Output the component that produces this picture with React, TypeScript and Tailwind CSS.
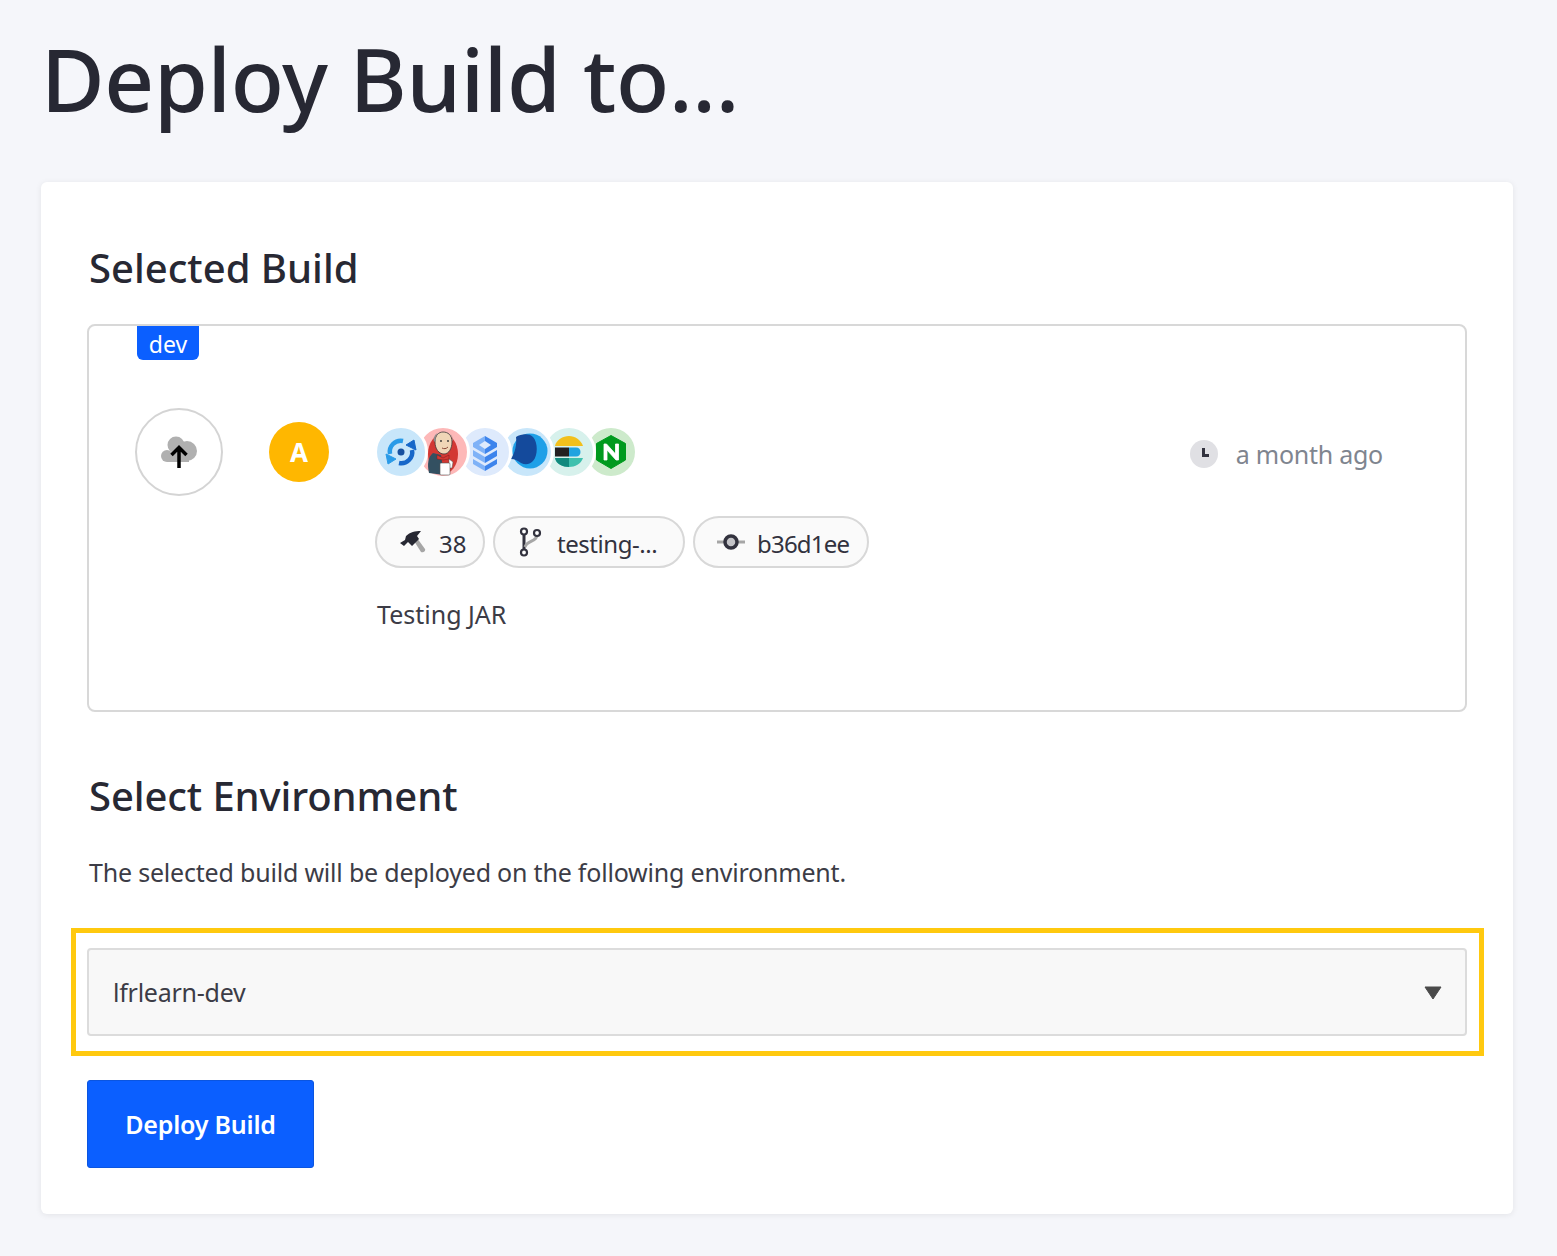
const font = { fontFamily: '"Noto Sans", "Open Sans", sans-serif' };

function StackIcons() {
  return (
    <svg width="258" height="48" viewBox="0 0 258 48" className="block">
      {/* drawn right to left: each circle sits on the next one, white ring makes the bite */}
      <circle cx="234" cy="24" r="24" fill="#cdeacb" />
      <path d="M234 7.500l14.500 8v16.500l-14.500 8.500-14.500-8.500v-16.500z" fill="#009a1e" stroke="#009a1e" strokeLinejoin="round" />
      <path d="M227 32V16h2.500l9 10V16h3v16h-2.500l-9-10v10z" fill="#fff" stroke="#fff" strokeWidth="0.8" />

      <circle cx="192" cy="24" r="25.500" fill="#d7f1ec" stroke="#fff" strokeWidth="3" />
      <path d="M178 18c1-6 8-10 14-10 6 0 12 4 14 10z" fill="#f2c01b" />
      <rect x="178" y="19.500" width="14" height="9" fill="#231f20" />
      <path d="M192 19.500h7c3 0 4.500 2 4.500 4.500s-1.500 4.500-4.500 4.500h-7z" fill="#21a3e0" />
      <path d="M178 30h28c-2 6-8 9-14 9-6 0-13-3-14-9z" fill="#3ec1ae" />
      <path d="M178 30h14v9c-6 0-13-3-14-9z" fill="#118a7e" />

      <circle cx="150" cy="24" r="25.500" fill="#c8e6fa" stroke="#fff" strokeWidth="3" />
      <circle cx="153" cy="23" r="17.500" fill="#1ea0e8" />
      <path d="M139 9c5-3 13-4 17 0 5 5 5 19 0 24-4 4-8 4-12 2-3-2-6-4-10-4 4-6 6-15 5-22z" fill="#144a9c" />

      <circle cx="108" cy="24" r="25.500" fill="#deeafc" stroke="#fff" strokeWidth="3" />
      <path d="M108 8l12 7v4l-12 7z" fill="#3d84ec" />
      <path d="M108 8l-12 7v4l12 7z" fill="#7fb2f7" />
      <path d="M108 13l6 4-6 4-6-4z" fill="#deeafc" />
      <path d="M96 22l12 7v6l-12-7z" fill="#7fb2f7" />
      <path d="M120 22l-12 7v6l12-7z" fill="#3d84ec" />
      <path d="M96 31l12 7v5l-12-7z" fill="#7fb2f7" />
      <path d="M120 31l-12 7v5l12-7z" fill="#3d84ec" />

      <circle cx="66" cy="24" r="25.500" fill="#fdb8b8" stroke="#fff" strokeWidth="3" />
      <ellipse cx="66" cy="26" rx="15" ry="20" fill="#d33833" />
      <path d="M52 45c-2-9-1-16 4-20l8 2 3 20z" fill="#335061" />
      <path d="M58 14c0-7 4-10 8-10 5 0 9 3 9 10 0 6-3 12-8 12-5 0-9-5-9-12z" fill="#f0d6b7" stroke="#3a3a3a" strokeWidth="0.8" />
      <path d="M59 12c-1-3 0-5 2-7l-2 1c-2 2-3 5-2 8zM75 12c1-2 0-4-2-6 2 1 3 4 3 7z" fill="#8c8c8c" />
      <circle cx="64" cy="13" r="0.900" fill="#333" />
      <circle cx="71" cy="13" r="0.900" fill="#333" />
      <path d="M65 20c2 1 4 1 6-1" fill="none" stroke="#8a4a3a" strokeWidth="1" />
      <path d="M60 27l6 3 6-3v4l-6 1-6-1z" fill="#d33833" stroke="#7a1f1c" strokeWidth="0.5" />
      <path d="M72 31l4 3-1 6h-3z" fill="#fff" stroke="#555" strokeWidth="0.5" />
      <rect x="63" y="35" width="10" height="12" rx="1" fill="#fff" stroke="#555" strokeWidth="0.6" />

      <circle cx="24" cy="24" r="25.500" fill="#c8e6fa" stroke="#fff" strokeWidth="3" />
      <path d="M13 26a11 11 0 0 1 13-13" fill="none" stroke="#2a9be8" strokeWidth="4.500" />
      <path d="M35 22a11 11 0 0 1-13 13" fill="none" stroke="#1767c9" strokeWidth="4.500" />
      <path d="M29 17l8-5 2 10z" fill="#1767c9" stroke="#1767c9" strokeLinejoin="round" />
      <path d="M19 31l-8 5-2-10z" fill="#2a9be8" stroke="#2a9be8" strokeLinejoin="round" />
      <circle cx="24" cy="24" r="3.500" fill="#17509f" />
    </svg>
  );
}

function Pill({ icon, label, className }: { icon: React.ReactNode; label: string; className: string }) {
  return (
    <div className={`flex h-[52px] items-center rounded-full border-2 border-[#d8d8d8] bg-[#fafafa] text-[24px] text-[#32323e] ${className}`}>
      {icon}
      <span className="pt-[4px]">{label}</span>
    </div>
  );
}

export default function App() {
  return (
    <div className="min-h-[1256px] bg-[#f5f6fa] pl-[41px] pr-[44px]" style={font}>
      <h1 className="pt-[28px] text-[87px] leading-[100px] font-medium tracking-[-0.3px] text-[#272833]">Deploy Build to...</h1>
      <div className="mt-[54px] h-[1032px] rounded-[6px] bg-white px-[46px] pt-[60px] shadow-[0_1px_6px_rgba(0,0,0,0.08)]">
        <h2 className="pl-[2px] text-[40px] leading-[52px] font-medium text-[#272833]">Selected Build</h2>
        <div className="relative mt-[30px] h-[388px] rounded-[8px] border-2 border-[#d8d8d8] px-[46px] pt-[82px]">
          <span className="absolute top-0 left-[48px] flex h-[34px] w-[62px] items-center justify-center rounded-b-[6px] bg-[#0b5fff] pt-[2px] text-[23px] leading-none text-white">dev</span>
          <div className="flex">
            <div className="flex h-[88px] w-[88px] shrink-0 items-center justify-center rounded-full border-2 border-[#d4d4d4] bg-white">
              <svg width="36" height="32" viewBox="0 0 36 32">
                <g fill="#b0b0b0">
                  <circle cx="15" cy="9" r="8.500" />
                  <circle cx="26" cy="15" r="10" />
                  <circle cx="6" cy="20" r="6" />
                  <rect x="6" y="16" width="22" height="10" />
                </g>
                <path d="M18 32V12M10.500 19l7.500-7.500 7.500 7.500" fill="none" stroke="#000" strokeWidth="3.500" />
              </svg>
            </div>
            <div className="ml-[46px] mt-[14px] flex h-[60px] w-[60px] shrink-0 items-center justify-center rounded-full bg-[#ffb700] text-[26px] font-bold text-white">A</div>
            <div className="ml-[48px] flex-1 pt-[20px]">
              <div className="flex items-start justify-between">
                <StackIcons />
                <div className="mt-[10px] mr-[36px] flex items-center">
                  <svg width="28" height="28" viewBox="0 0 28 28">
                    <circle cx="14" cy="14" r="14" fill="#e0e0e4" />
                    <path d="M12 8h3v6h4v3h-7z" fill="#32323e" />
                  </svg>
                  <span className="ml-[18px] text-[25px] leading-[32px] tracking-[-0.25px] text-[#7f858f]">a month ago</span>
                </div>
              </div>
              <div className="mt-[40px] -ml-[2px] flex gap-[8px]">
                <Pill
                  className="w-[110px] pl-[23px]"
                  label="38"
                  icon={
                    <svg width="26" height="24" viewBox="0 0 26 24" className="mr-[13px]">
                      <path d="M14 11l3-3 8 11c1 2-2 4-4 3z" fill="#a6a6a6" />
                      <path d="M0 13l5-3 1-4c4-4 9-5 15-5l-4 5 2 3-7 7-4-4-4 4z" fill="#272833" />
                    </svg>
                  }
                />
                <Pill
                  className="w-[192px] pl-[24px] tracking-[-0.45px]"
                  label="testing-..."
                  icon={
                    <svg width="24" height="30" viewBox="0 0 24 30" className="mr-[14px]">
                      <path d="M5 7v16" stroke="#32323e" strokeWidth="3" />
                      <path d="M18 8c0 7-10 5-12 12" fill="none" stroke="#a6a6a6" strokeWidth="3" />
                      <circle cx="5" cy="4.500" r="3" fill="#fff" stroke="#32323e" strokeWidth="2.200" />
                      <circle cx="5" cy="25.500" r="3" fill="#fff" stroke="#32323e" strokeWidth="2.200" />
                      <circle cx="18" cy="6" r="3" fill="#fff" stroke="#32323e" strokeWidth="2.200" />
                    </svg>
                  }
                />
                <Pill
                  className="w-[176px] pl-[22px] tracking-[-0.8px]"
                  label="b36d1ee"
                  icon={
                    <svg width="28" height="20" viewBox="0 0 28 20" className="mr-[12px]">
                      <path d="M0 10h28" stroke="#a6a6a6" strokeWidth="3" />
                      <circle cx="14" cy="10" r="6" fill="#c4c4c8" stroke="#32323e" strokeWidth="3.500" />
                    </svg>
                  }
                />
              </div>
              <p className="mt-[26px] text-[25px] leading-[40px] text-[#3c3c46]">Testing JAR</p>
            </div>
          </div>
        </div>
        <h2 className="mt-[58px] pl-[2px] text-[40px] leading-[52px] font-medium tracking-[-0.1px] text-[#272833]">Select Environment</h2>
        <p className="mt-[32px] pl-[2px] text-[25px] leading-[36px] tracking-[-0.2px] text-[#3c3c46]">The selected build will be deployed on the following environment.</p>
        <div className="relative mt-[58px]">
          <div className="absolute -top-[20px] -right-[17px] -bottom-[20px] -left-[16px] border-[5px] border-[#ffc90f]" />
          <div className="flex h-[88px] items-center justify-between rounded-[4px] border-2 border-[#dcdcdc] bg-[#f8f8f8] pt-[2px] pr-[23px] pl-[24px] text-[25px] tracking-[-0.25px] text-[#3c3c46]">
            <span>lfrlearn-dev</span>
            <svg width="18" height="14" viewBox="0 0 18 14"><path d="M1 1h16l-8 12z" fill="#4a4a4a" stroke="#4a4a4a" strokeLinejoin="round" /></svg>
          </div>
        </div>
        <button className="mt-[44px] flex h-[88px] w-[227px] items-center justify-center rounded-[3px] border border-[#0b55e0] bg-[#0b5fff] pt-[2px] text-[25px] font-semibold tracking-[-0.2px] text-white">Deploy Build</button>
      </div>
    </div>
  );
}
